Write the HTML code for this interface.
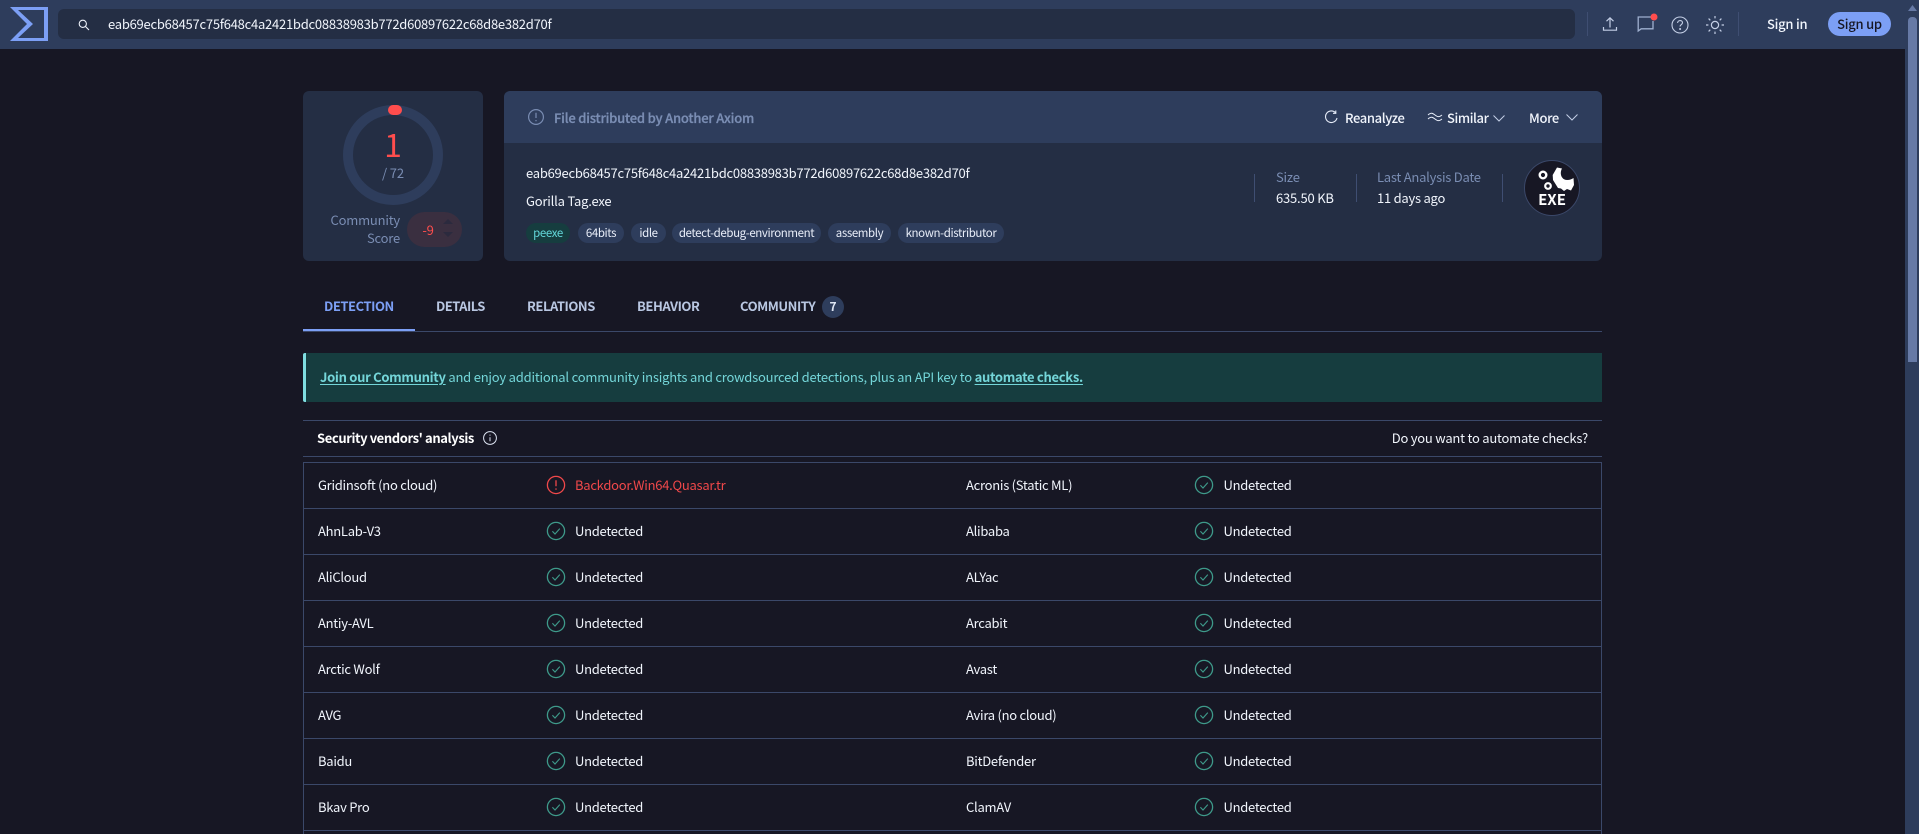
<!DOCTYPE html>
<html><head><meta charset="utf-8"><title>VirusTotal</title>
<style>
*{box-sizing:border-box}
html,body{margin:0;padding:0;width:1919px;height:834px;overflow:hidden;background:#171724}
body{font-family:"Noto Sans CJK JP","Liberation Sans",sans-serif;color:#f1f5fc;font-size:13px;letter-spacing:-.27px;position:relative}
.a{position:absolute;white-space:nowrap;line-height:20px}
.m{color:#7a8db3}
.s{font-weight:500}
.tag{position:absolute;top:223px;height:20px;border-radius:10px;background:#2e3d5c;font-size:11.5px;letter-spacing:-.4px;line-height:20px;text-align:center;color:#e9eef9;white-space:nowrap}
.tab{position:absolute;top:296px;line-height:20px;font-size:13px;font-weight:700;letter-spacing:-.45px;color:#b9c7e2;white-space:nowrap}
.hl{position:absolute;height:1px;background:#3b4869}
.vl{position:absolute;width:1px;background:#3f4e72}
.bb{font-weight:700;letter-spacing:-.3px}
svg{position:absolute;overflow:visible}
u{text-underline-offset:2px}
</style></head><body>

<!-- header -->
<div class="a" style="left:0;top:0;width:1919px;height:49px;background:#2e3d5c"></div>
<svg style="left:10px;top:7px" width="38" height="34" viewBox="0 0 38 34"><path d="M0 0H38V34H0L17 17Z M8 3 L23 17 L8 31 H34 V3Z" fill="#7c9ff5" fill-rule="evenodd"/></svg>
<div class="a" style="left:58px;top:9px;width:1517px;height:30px;border-radius:6px;background:#242e44"></div>
<svg style="left:78px;top:19px" width="12" height="12" viewBox="0 0 12 12" fill="none" stroke="#eef2fa" stroke-width="1.1"><circle cx="4.8" cy="4.8" r="3.6"/><path d="M7.5 7.5L11 11"/></svg>
<div class="a" style="left:108px;top:14px;letter-spacing:-.25px">eab69ecb68457c75f648c4a2421bdc08838983b772d60897622c68d8e382d70f</div>
<div class="vl" style="left:1587px;top:12px;height:24px"></div>
<div class="vl" style="left:1738px;top:12px;height:24px"></div>
<svg style="left:1602px;top:16px" width="16" height="16" viewBox="0 0 16 16" fill="none" stroke="#c4cfe6" stroke-width="1.2"><path d="M8 11.5V2M4.5 5.2L8 1.8l3.5 3.4M1.5 11v3.2h13V11"/></svg>
<svg style="left:1637px;top:15px" width="18" height="18" viewBox="0 0 18 18" fill="none" stroke="#9fb0cf" stroke-width="1.3"><path d="M14 2H1.2v14l3-2.2H16V6"/></svg>
<svg style="left:1650px;top:13px" width="8" height="8"><circle cx="4" cy="4" r="3.5" fill="#ff4d4d"/></svg>
<svg style="left:1671px;top:16px" width="18" height="18" viewBox="0 0 18 18" fill="none" stroke="#c4cfe6" stroke-width="1.1"><circle cx="9" cy="9" r="8"/><path d="M6.6 7c0-1.5 1.1-2.4 2.5-2.4s2.4.9 2.4 2.1c0 1.8-2.4 1.9-2.4 3.8"/><circle cx="9.1" cy="13" r=".5"/></svg>
<svg style="left:1705px;top:15px" width="20" height="20" viewBox="0 0 20 20" fill="none" stroke="#c4cfe6" stroke-width="1.2"><circle cx="10" cy="10" r="3.6"/><path d="M10 1v2.4M10 16.6V19M1 10h2.4M16.6 10H19M3.6 3.6l1.7 1.7M14.7 14.7l1.7 1.7M3.6 16.4l1.7-1.7M14.7 5.3l1.7-1.7"/></svg>
<div class="a s" style="left:1767px;top:14px;letter-spacing:-.25px">Sign in</div>
<div class="a s" style="left:1828px;top:12px;width:63px;height:24px;border-radius:12px;background:#7c9ff5;color:#171724;text-align:center;line-height:23px;letter-spacing:-.25px">Sign up</div>

<!-- scrollbar -->
<div class="a" style="left:1905px;top:0;width:14px;height:834px;background:#2e3d5c"></div>
<div class="a" style="left:1908px;top:17px;width:9px;height:345px;border-radius:4px 4px 0 0;background:#677aa6"></div>
<svg style="left:1908px;top:5px" width="9" height="7"><path d="M4.5 0L9 6H0Z" fill="#677aa6"/></svg>

<!-- score card -->
<div class="a" style="left:303px;top:91px;width:180px;height:170px;border-radius:6px;background:#242e44"></div>
<svg style="left:343px;top:105px" width="100" height="100" viewBox="0 0 100 100" fill="none"><circle cx="50" cy="50" r="45" stroke="#2e3d5c" stroke-width="10"/><path d="M50 5H54" stroke="#ff4d4d" stroke-width="10" stroke-linecap="round"/></svg>
<div class="a" style="left:343px;top:126px;width:100px;text-align:center;font-size:32px;line-height:36px;letter-spacing:0;color:#ff4d4d;font-weight:400">1</div>
<div class="a m" style="left:343px;top:163px;width:100px;text-align:center;font-size:13px;letter-spacing:-.1px">/ 72</div>
<div class="a m" style="left:303px;top:211px;width:97px;text-align:right;line-height:18px;white-space:normal;letter-spacing:-.2px">Community<br>Score</div>
<div class="a" style="left:407px;top:212px;width:55px;height:35px;border-radius:18px;background:#3a2f40"></div>
<div class="a" style="left:413px;top:220px;width:30px;text-align:center;font-size:13px;color:#ff4d4d">-9</div>
<svg style="left:443px;top:219px" width="10" height="20"><path d="M5 0L10 5H0Z M0 13H10L5 18Z" fill="#2b2a3e"/></svg>

<!-- file card -->
<div class="a" style="left:504px;top:91px;width:1098px;height:170px;border-radius:6px;background:#242e44"></div>
<div class="a" style="left:504px;top:91px;width:1098px;height:52px;border-radius:6px 6px 0 0;background:#2e3d5c"></div>
<svg style="left:528px;top:109px" width="16" height="16" viewBox="0 0 16 16" fill="none" stroke="#7a8db3" stroke-width="1.2"><circle cx="8" cy="8" r="7.4"/><path d="M8 3.8v5.2M8 11v1.2"/></svg>
<div class="a s m" style="left:554px;top:108px;letter-spacing:-.2px;-webkit-text-stroke:.3px #7a8db3">File distributed by Another Axiom</div>
<svg style="left:1325px;top:110px" width="13" height="14" viewBox="0 0 13 14" fill="none" stroke="#e6ecf8" stroke-width="1.1"><path d="M10.6 2.8A5.8 5.8 0 1 0 12 8"/><path d="M10.8.5v2.8H8"/></svg>
<div class="a s" style="left:1345px;top:108px;letter-spacing:-.37px">Reanalyze</div>
<svg style="left:1428px;top:112px" width="14" height="10" viewBox="0 0 14 10" fill="none" stroke="#e6ecf8" stroke-width="1"><path d="M0 3c3-2.6 4.5-2 7 0s4 2.4 7 0M0 7c3-2.6 4.5-2 7 0s4 2.4 7 0"/></svg>
<div class="a s" style="left:1447px;top:108px;letter-spacing:-.4px">Similar</div>
<svg style="left:1493px;top:115px" width="12" height="7" fill="none" stroke="#c4cfe6" stroke-width="1"><path d="M.5.5L6 6l5.5-5.5"/></svg>
<div class="a s" style="left:1529px;top:108px;letter-spacing:-.35px">More</div>
<svg style="left:1566px;top:114px" width="12" height="7" fill="none" stroke="#c4cfe6" stroke-width="1"><path d="M.5.5L6 6l5.5-5.5"/></svg>

<div class="a" style="left:526px;top:163px;letter-spacing:-.25px">eab69ecb68457c75f648c4a2421bdc08838983b772d60897622c68d8e382d70f</div>
<div class="a" style="left:526px;top:191px;letter-spacing:-.2px">Gorilla Tag.exe</div>
<div class="tag" style="left:526px;width:44px;background:#163d3f;color:#62d6d8">peexe</div>
<div class="tag" style="left:578px;width:46px">64bits</div>
<div class="tag" style="left:631px;width:35px">idle</div>
<div class="tag" style="left:672px;width:149px">detect-debug-environment</div>
<div class="tag" style="left:828px;width:63px">assembly</div>
<div class="tag" style="left:898px;width:106px">known-distributor</div>

<div class="vl" style="left:1254px;top:174px;height:28px"></div>
<div class="vl" style="left:1356px;top:174px;height:28px"></div>
<div class="vl" style="left:1502px;top:174px;height:28px"></div>
<div class="a m" style="left:1276px;top:167px;letter-spacing:-.2px">Size</div>
<div class="a" style="left:1276px;top:188px;letter-spacing:-.2px">635.50 KB</div>
<div class="a m" style="left:1377px;top:167px;letter-spacing:-.25px">Last Analysis Date</div>
<div class="a" style="left:1377px;top:188px;letter-spacing:-.25px">11 days ago</div>

<div class="a" style="left:1524px;top:160px;width:56px;height:56px;border-radius:50%;background:#171724;border:1px solid #3b4869"></div>
<svg style="left:1538px;top:166px" width="36" height="28" viewBox="0 0 36 28" fill="none"><circle cx="5" cy="9" r="3.3" stroke="#fff" stroke-width="2.4"/><circle cx="10" cy="20" r="2.8" stroke="#fff" stroke-width="2.2"/><path d="M19 1.5L24 2.5C21 8 24 14 29 14C32 14 34 13 35.5 12L36 19L33 24.5L29 23L26 25L23 22.5L20 22L15 14L14.7 9Z" fill="#fff"/></svg>
<div class="a" style="left:1524px;top:190px;width:56px;text-align:center;font-size:15px;letter-spacing:0;font-weight:700;color:#fff">EXE</div>

<!-- tabs -->
<div class="tab" style="left:324px;color:#7c9ff5">DETECTION</div>
<div class="tab" style="left:436px;letter-spacing:-.55px">DETAILS</div>
<div class="tab" style="left:527px">RELATIONS</div>
<div class="tab" style="left:637px">BEHAVIOR</div>
<div class="tab" style="left:740px">COMMUNITY</div>
<div class="a" style="left:822px;top:296px;width:22px;height:22px;border-radius:50%;background:#2e3d5c;text-align:center;line-height:22px;font-size:12px;font-weight:700;letter-spacing:0;color:#dfe6f4">7</div>
<div class="hl" style="left:303px;top:331px;width:1299px"></div>
<div class="a" style="left:303px;top:329px;width:112px;height:2px;background:#7c9ff5"></div>

<!-- banner -->
<div class="a" style="left:303px;top:353px;width:1299px;height:49px;background:#163d3f;border-left:3px solid #7fdde0;border-radius:2px 0 0 2px"></div>
<div class="a" style="left:320px;top:367px;color:#74d6d9;letter-spacing:-.21px"><b class="bb"><u>Join our Community</u></b> and enjoy additional community insights and crowdsourced detections, plus an API key to <b class="bb"><u>automate checks.</u></b></div>

<!-- section -->
<div class="hl" style="left:303px;top:420px;width:1299px"></div>
<div class="hl" style="left:303px;top:456px;width:1299px"></div>
<div class="a" style="left:317px;top:428px;font-weight:700;letter-spacing:-.4px;color:#fff">Security vendors' analysis</div>
<svg style="left:483px;top:431px" width="14" height="14" viewBox="0 0 14 14" fill="none" stroke="#dfe6f4" stroke-width="1"><circle cx="7" cy="7" r="6.4"/><path d="M7 6.2v4M7 3.6v1"/></svg>
<div class="a" style="right:331px;top:428px;letter-spacing:-.23px">Do you want to automate checks?</div>

<!-- table -->
<div class="a" style="left:303px;top:462px;width:1299px;height:380px;border:1px solid #3b4869"></div>
<div class="hl" style="left:303px;top:508px;width:1299px"></div>
<div class="hl" style="left:303px;top:554px;width:1299px"></div>
<div class="hl" style="left:303px;top:600px;width:1299px"></div>
<div class="hl" style="left:303px;top:646px;width:1299px"></div>
<div class="hl" style="left:303px;top:692px;width:1299px"></div>
<div class="hl" style="left:303px;top:738px;width:1299px"></div>
<div class="hl" style="left:303px;top:784px;width:1299px"></div>
<div class="hl" style="left:303px;top:830px;width:1299px"></div>

<svg width="0" height="0" style="left:0;top:0"><defs><g id="ok" fill="none" stroke="#3e9a8a" stroke-width="1.3"><circle cx="9" cy="9" r="8.6"/><path d="M5.4 9.2l2.6 2.8 4.8-5.4" stroke-width="1.1"/></g></defs></svg>

<div class="a" style="left:318px;top:475px">Gridinsoft (no cloud)</div>
<svg style="left:547px;top:476px" width="18" height="18" viewBox="0 0 18 18" fill="none" stroke="#f0484a" stroke-width="1.3"><circle cx="9" cy="9" r="8.6"/><path d="M9 4.2v6M9 12.4v1.4"/></svg>
<div class="a" style="left:575px;top:475px;color:#f0484a">Backdoor.Win64.Quasar.tr</div>
<div class="a" style="left:966px;top:475px">Acronis (Static ML)</div>
<svg style="left:1195px;top:476px" width="18" height="18"><use href="#ok"/></svg>
<div class="a" style="left:1223.5px;top:475px">Undetected</div>

<div class="a" style="left:318px;top:521px">AhnLab-V3</div>
<svg style="left:547px;top:522px" width="18" height="18"><use href="#ok"/></svg>
<div class="a" style="left:575px;top:521px">Undetected</div>
<div class="a" style="left:966px;top:521px">Alibaba</div>
<svg style="left:1195px;top:522px" width="18" height="18"><use href="#ok"/></svg>
<div class="a" style="left:1223.5px;top:521px">Undetected</div>

<div class="a" style="left:318px;top:567px">AliCloud</div>
<svg style="left:547px;top:568px" width="18" height="18"><use href="#ok"/></svg>
<div class="a" style="left:575px;top:567px">Undetected</div>
<div class="a" style="left:966px;top:567px">ALYac</div>
<svg style="left:1195px;top:568px" width="18" height="18"><use href="#ok"/></svg>
<div class="a" style="left:1223.5px;top:567px">Undetected</div>

<div class="a" style="left:318px;top:613px">Antiy-AVL</div>
<svg style="left:547px;top:614px" width="18" height="18"><use href="#ok"/></svg>
<div class="a" style="left:575px;top:613px">Undetected</div>
<div class="a" style="left:966px;top:613px">Arcabit</div>
<svg style="left:1195px;top:614px" width="18" height="18"><use href="#ok"/></svg>
<div class="a" style="left:1223.5px;top:613px">Undetected</div>

<div class="a" style="left:318px;top:659px">Arctic Wolf</div>
<svg style="left:547px;top:660px" width="18" height="18"><use href="#ok"/></svg>
<div class="a" style="left:575px;top:659px">Undetected</div>
<div class="a" style="left:966px;top:659px">Avast</div>
<svg style="left:1195px;top:660px" width="18" height="18"><use href="#ok"/></svg>
<div class="a" style="left:1223.5px;top:659px">Undetected</div>

<div class="a" style="left:318px;top:705px">AVG</div>
<svg style="left:547px;top:706px" width="18" height="18"><use href="#ok"/></svg>
<div class="a" style="left:575px;top:705px">Undetected</div>
<div class="a" style="left:966px;top:705px">Avira (no cloud)</div>
<svg style="left:1195px;top:706px" width="18" height="18"><use href="#ok"/></svg>
<div class="a" style="left:1223.5px;top:705px">Undetected</div>

<div class="a" style="left:318px;top:751px">Baidu</div>
<svg style="left:547px;top:752px" width="18" height="18"><use href="#ok"/></svg>
<div class="a" style="left:575px;top:751px">Undetected</div>
<div class="a" style="left:966px;top:751px">BitDefender</div>
<svg style="left:1195px;top:752px" width="18" height="18"><use href="#ok"/></svg>
<div class="a" style="left:1223.5px;top:751px">Undetected</div>

<div class="a" style="left:318px;top:797px">Bkav Pro</div>
<svg style="left:547px;top:798px" width="18" height="18"><use href="#ok"/></svg>
<div class="a" style="left:575px;top:797px">Undetected</div>
<div class="a" style="left:966px;top:797px">ClamAV</div>
<svg style="left:1195px;top:798px" width="18" height="18"><use href="#ok"/></svg>
<div class="a" style="left:1223.5px;top:797px">Undetected</div>

</body></html>
